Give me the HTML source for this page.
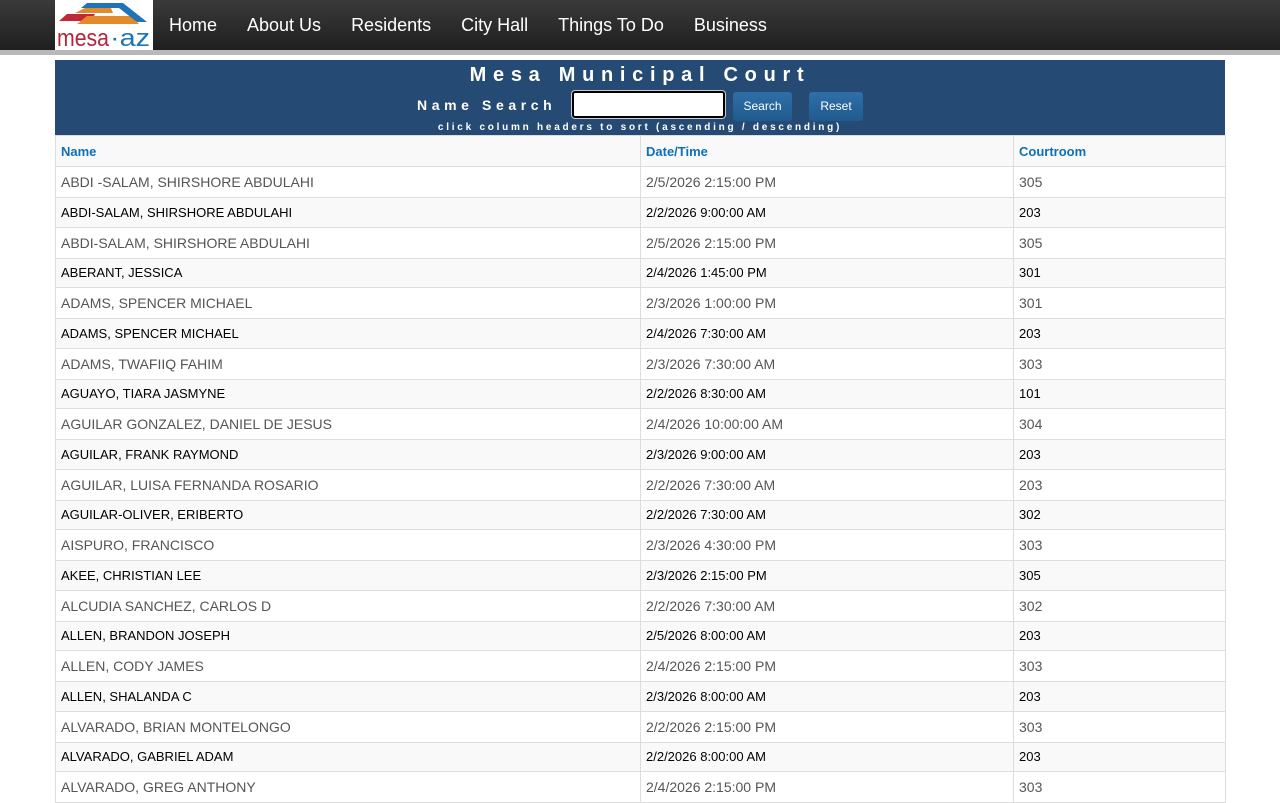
<!DOCTYPE html>
<html><head><meta charset="utf-8"><style>
*{margin:0;padding:0;box-sizing:border-box}
body{width:1280px;height:800px;overflow:hidden;background:#fff;font-family:"Liberation Sans",Arial,sans-serif}
.nav{height:50px;background:linear-gradient(#3a3a3a,#1f1f1f);position:relative}
.navbar2{height:5px;background:#b8b8b8}
.logo{position:absolute;left:55px;top:0;width:98px;height:50px;background:#fff}
.menu{position:absolute;left:154px;top:0;display:flex}
.menu a{color:#fff;font-size:18px;line-height:50px;padding:0 15px;text-decoration:none}
.hdr{position:absolute;left:55px;top:60px;width:1170px;height:76px;background:#254a73;color:#fff;text-align:center}
.t1{font-size:20px;font-weight:bold;letter-spacing:6.7px;position:absolute;left:0;right:0;top:4px}
.ns{position:absolute;left:362px;top:37px;font-size:14px;font-weight:bold;letter-spacing:4.6px}
.inp{position:absolute;left:517px;top:31px;width:153px;height:27px;background:#fff;border:2px solid #000;border-radius:3px;box-shadow:0 0 0 1px #ccc}
.btn{position:absolute;top:32px;height:29px;background:linear-gradient(#2f6fa8,#215a8e);border-radius:3px;font-size:12px;line-height:29px;color:#fff}
.t3{position:absolute;left:0;right:0;top:62px;font-size:10px;font-weight:bold;letter-spacing:2.75px}
table{position:absolute;left:55px;top:135px;width:1171px;border-collapse:collapse}
td,th{border:1px solid #ddd;text-align:left;padding:0 0 0 5px;vertical-align:middle;white-space:nowrap}
th{height:31px;background:#f9f9f9;color:#0e70b8;font-size:13px;font-weight:bold}
tr.o td{height:31px;color:#555;font-size:14px;background:#fff}
tr.e td{height:29.5px;color:#000;font-size:13px;background:#f9f9f9}
</style></head><body>
<div class="nav">
<div class="logo"><svg width="98" height="50" viewBox="0 0 98 50">
<polygon points="4,21 12,14 40,14 36,21" fill="#c0283a"/>
<polygon points="20,13 30,8 56,8 58,13" fill="#e38a2a"/>
<polygon points="22,24 32,16 76,16 84,24" fill="#e38a2a"/>
<polygon points="26,8 32,3 68,3 92,22 82,22 64,8" fill="#1f74b8"/>
<text x="2" y="46" font-family="Liberation Sans,sans-serif" font-size="24" fill="#b5243a" textLength="52" lengthAdjust="spacingAndGlyphs">mesa</text>
<text x="55" y="46" font-family="Liberation Sans,sans-serif" font-size="24" fill="#1f74b8" textLength="40" lengthAdjust="spacingAndGlyphs">·az</text>
</svg></div>
<div class="menu"><a>Home</a><a>About Us</a><a>Residents</a><a>City Hall</a><a>Things To Do</a><a>Business</a></div>
</div>
<div class="navbar2"></div>
<div class="hdr">
<div class="t1">Mesa Municipal Court</div>
<div class="ns">Name Search</div>
<div class="inp"></div>
<div class="btn" style="left:678px;width:59px">Search</div>
<div class="btn" style="left:754px;width:54px">Reset</div>
<div class="t3">click column headers to sort (ascending / descending)</div>
</div>
<table>
<tr><th style="width:585px">Name</th><th style="width:373px">Date/Time</th><th>Courtroom</th></tr>
<tr class="o"><td>ABDI -SALAM, SHIRSHORE ABDULAHI</td><td>2/5/2026 2:15:00 PM</td><td>305</td></tr>
<tr class="e"><td>ABDI-SALAM, SHIRSHORE ABDULAHI</td><td>2/2/2026 9:00:00 AM</td><td>203</td></tr>
<tr class="o"><td>ABDI-SALAM, SHIRSHORE ABDULAHI</td><td>2/5/2026 2:15:00 PM</td><td>305</td></tr>
<tr class="e"><td>ABERANT, JESSICA</td><td>2/4/2026 1:45:00 PM</td><td>301</td></tr>
<tr class="o"><td>ADAMS, SPENCER MICHAEL</td><td>2/3/2026 1:00:00 PM</td><td>301</td></tr>
<tr class="e"><td>ADAMS, SPENCER MICHAEL</td><td>2/4/2026 7:30:00 AM</td><td>203</td></tr>
<tr class="o"><td>ADAMS, TWAFIIQ FAHIM</td><td>2/3/2026 7:30:00 AM</td><td>303</td></tr>
<tr class="e"><td>AGUAYO, TIARA JASMYNE</td><td>2/2/2026 8:30:00 AM</td><td>101</td></tr>
<tr class="o"><td>AGUILAR GONZALEZ, DANIEL DE JESUS</td><td>2/4/2026 10:00:00 AM</td><td>304</td></tr>
<tr class="e"><td>AGUILAR, FRANK RAYMOND</td><td>2/3/2026 9:00:00 AM</td><td>203</td></tr>
<tr class="o"><td>AGUILAR, LUISA FERNANDA ROSARIO</td><td>2/2/2026 7:30:00 AM</td><td>203</td></tr>
<tr class="e"><td>AGUILAR-OLIVER, ERIBERTO</td><td>2/2/2026 7:30:00 AM</td><td>302</td></tr>
<tr class="o"><td>AISPURO, FRANCISCO</td><td>2/3/2026 4:30:00 PM</td><td>303</td></tr>
<tr class="e"><td>AKEE, CHRISTIAN LEE</td><td>2/3/2026 2:15:00 PM</td><td>305</td></tr>
<tr class="o"><td>ALCUDIA SANCHEZ, CARLOS D</td><td>2/2/2026 7:30:00 AM</td><td>302</td></tr>
<tr class="e"><td>ALLEN, BRANDON JOSEPH</td><td>2/5/2026 8:00:00 AM</td><td>203</td></tr>
<tr class="o"><td>ALLEN, CODY JAMES</td><td>2/4/2026 2:15:00 PM</td><td>303</td></tr>
<tr class="e"><td>ALLEN, SHALANDA C</td><td>2/3/2026 8:00:00 AM</td><td>203</td></tr>
<tr class="o"><td>ALVARADO, BRIAN MONTELONGO</td><td>2/2/2026 2:15:00 PM</td><td>303</td></tr>
<tr class="e"><td>ALVARADO, GABRIEL ADAM</td><td>2/2/2026 8:00:00 AM</td><td>203</td></tr>
<tr class="o"><td>ALVARADO, GREG ANTHONY</td><td>2/4/2026 2:15:00 PM</td><td>303</td></tr>
</table>
</body></html>
